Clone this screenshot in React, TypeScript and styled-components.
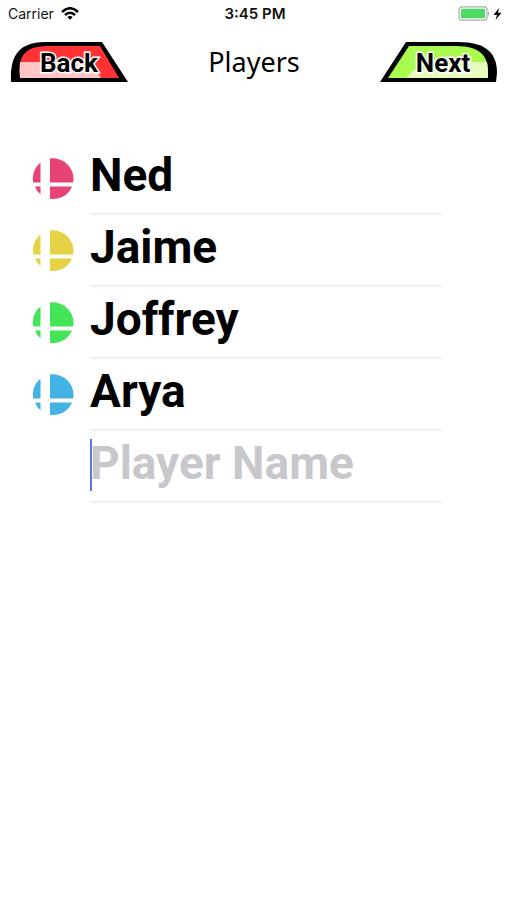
import React, { useState } from "react";
import styled, { createGlobalStyle } from "styled-components";

const GlobalStyle = createGlobalStyle`
  * { box-sizing: border-box; }
  body { margin: 0; background: #fff; color: #000; font-family: Inter, sans-serif; }
`;

const Screen = styled.div`
  min-height: 100vh;
  background: #fff;
`;

const StatusBar = styled.div`
  display: grid;
  grid-template-columns: 1fr auto 1fr;
  align-items: center;
  height: 27px;
  padding: 0 5px 0 8px;
  color: #111;
`;

const Carrier = styled.div`
  display: flex;
  align-items: center;
  gap: 5px;
  font-size: 14px;
`;

const Clock = styled.time`
  font-size: 15px;
  font-weight: 600;
`;

const Power = styled.div`
  display: flex;
  justify-content: flex-end;
  align-items: center;
  gap: 3px;
`;

const NavBar = styled.header`
  display: grid;
  grid-template-columns: 1fr auto 1fr;
  align-items: center;
  height: 70px;
  padding: 0 9px 0 10px;
`;

const Title = styled.h1`
  margin: 0;
  font-family: "Noto Sans", sans-serif;
  font-size: 27px;
  font-weight: 400;
  line-height: 36px;
`;

const TabButton = styled.button<{ $side: "left" | "right" }>`
  display: grid;
  justify-self: ${(p) => (p.$side === "left" ? "start" : "end")};
  place-items: center;
  padding: 0;
  border: 0;
  background: none;
  cursor: pointer;
  > * { grid-area: 1 / 1; }
`;

const TabLabel = styled.span<{ $side: "left" | "right" }>`
  padding-top: 2px;
  padding-left: ${(p) => (p.$side === "left" ? 0 : 8)}px;
  font-family: Roboto, sans-serif;
  font-size: 26px;
  font-weight: 700;
  line-height: 38px;
  color: #000;
  -webkit-text-stroke: 3px #fff;
  paint-order: stroke fill;
`;

const Players = styled.ul`
  margin: 0;
  padding: 46px 65px 0 32px;
  list-style: none;
`;

const Row = styled.li`
  display: grid;
  grid-template-columns: 42px 1fr;
  column-gap: 16px;
  align-items: center;
`;

const Field = styled.div`
  position: relative;
  grid-column: 2;
  height: 72px;
  border-bottom: 2px solid #f0f0f1;
`;

const NameInput = styled.input`
  display: block;
  width: 100%;
  height: 64px;
  padding: 0;
  border: 0;
  outline: none;
  background: transparent;
  color: #000;
  caret-color: #5578e8;
  font-family: Roboto, sans-serif;
  font-size: 46px;
  font-weight: 700;
  &::placeholder { color: #c7c7cc; opacity: 1; }
`;

const Caret = styled.span`
  position: absolute;
  left: 0;
  top: 8px;
  width: 2px;
  height: 52px;
  background: #5578e8;
`;

const Emblem = ({ color }: { color: string }) => (
  <svg width="42" height="42" viewBox="0 0 42 42" aria-hidden="true">
    <g fill={color}>
      <path d="M8.5 4.700V24.500H1.200C-.2 16 3 8.700 8.500 4.700Z" />
      <path d="M18 .4C31 -.9 41.500 9 41.500 21Q41.500 23 41.100 24.500H18Z" />
      <path d="M3 28.500H8.500V36.300Q4.800 33.500 3 28.500Z" />
      <path d="M18 28.500H40C36.500 37.100 28 42 18 40.800Z" />
    </g>
  </svg>
);

const BackShape = () => (
  <svg width="118" height="40" viewBox="0 0 118 40" aria-hidden="true">
    <path d="M1 40C0 18 5 0 36 0H92L118 40Z" fill="#000" />
    <path d="M10 36C9 18 10 4 38 4H90L109 36Z" fill="#ff3235" />
    <path d="M10 20H82L91 36H10Q9 27 10 20Z" fill="#ffc4c6" />
  </svg>
);

const NextShape = () => (
  <svg width="118" height="40" viewBox="0 0 118 40" aria-hidden="true">
    <path d="M0 40L26 0H78C107 0 117 12 117 31L116 40Z" fill="#000" />
    <path d="M8 36L29 4H76C102 4 108 16 108 30V36Z" fill="#a9fb4e" />
    <path d="M27 36Q31 27 40 27L84 20H107Q108 26 108 36Z" fill="#e6fbbd" />
  </svg>
);

const initial = [
  { name: "Ned", color: "#e74375" },
  { name: "Jaime", color: "#e5d345" },
  { name: "Joffrey", color: "#43e557" },
  { name: "Arya", color: "#43b2e5" },
];

export default function App() {
  const [players, setPlayers] = useState(initial);
  const [draft, setDraft] = useState("");
  const rename = (index: number, name: string) =>
    setPlayers(players.map((p, i) => (i === index ? { ...p, name } : p)));

  return (
    <Screen>
      <GlobalStyle />
      <StatusBar>
        <Carrier>
          Carrier
          <svg width="22" height="13" viewBox="-2 0 22 13" aria-label="Wi-Fi" fill="none" stroke="#000" strokeWidth="2.500">
            <path d="M1 5Q9 -2.500 17 5" />
            <path d="M4 8Q9 3.500 14 8" />
            <path d="M6.300 10Q9 7.800 11.700 10L9 12.800Z" fill="#000" stroke="none" />
          </svg>
        </Carrier>
        <Clock>3:45 PM</Clock>
        <Power>
          <svg width="32" height="15" viewBox="0 0 32 15" aria-label="Battery full">
            <rect x="1" y=".8" width="28" height="13.400" rx="3" fill="#fff" stroke="#aaa" strokeWidth="1.200" />
            <rect x="3" y="2.800" width="24" height="9.400" rx="1" fill="#4cd964" />
            <path d="M30 5Q32 7.500 30 10Z" fill="#999" />
          </svg>
          <svg width="9" height="12" viewBox="0 0 8 12" aria-label="Charging">
            <path d="M5.500 0L0 7H3.500L2 12L8 4.800H4.500Z" fill="#000" />
          </svg>
        </Power>
      </StatusBar>
      <NavBar>
        <TabButton type="button" $side="left">
          <BackShape />
          <TabLabel $side="left">Back</TabLabel>
        </TabButton>
        <Title>Players</Title>
        <TabButton type="button" $side="right">
          <NextShape />
          <TabLabel $side="right">Next</TabLabel>
        </TabButton>
      </NavBar>
      <Players>
        {players.map((p, i) => (
          <Row key={p.color}>
            <Emblem color={p.color} />
            <Field>
              <NameInput
                aria-label={`Player ${i + 1}`}
                value={p.name}
                onChange={(e) => rename(i, e.target.value)}
              />
            </Field>
          </Row>
        ))}
        <Row>
          <Field>
            <NameInput
              aria-label="New player"
              placeholder="Player Name"
              value={draft}
              onChange={(e) => setDraft(e.target.value)}
            />
            {draft === "" && <Caret />}
          </Field>
        </Row>
      </Players>
    </Screen>
  );
}
